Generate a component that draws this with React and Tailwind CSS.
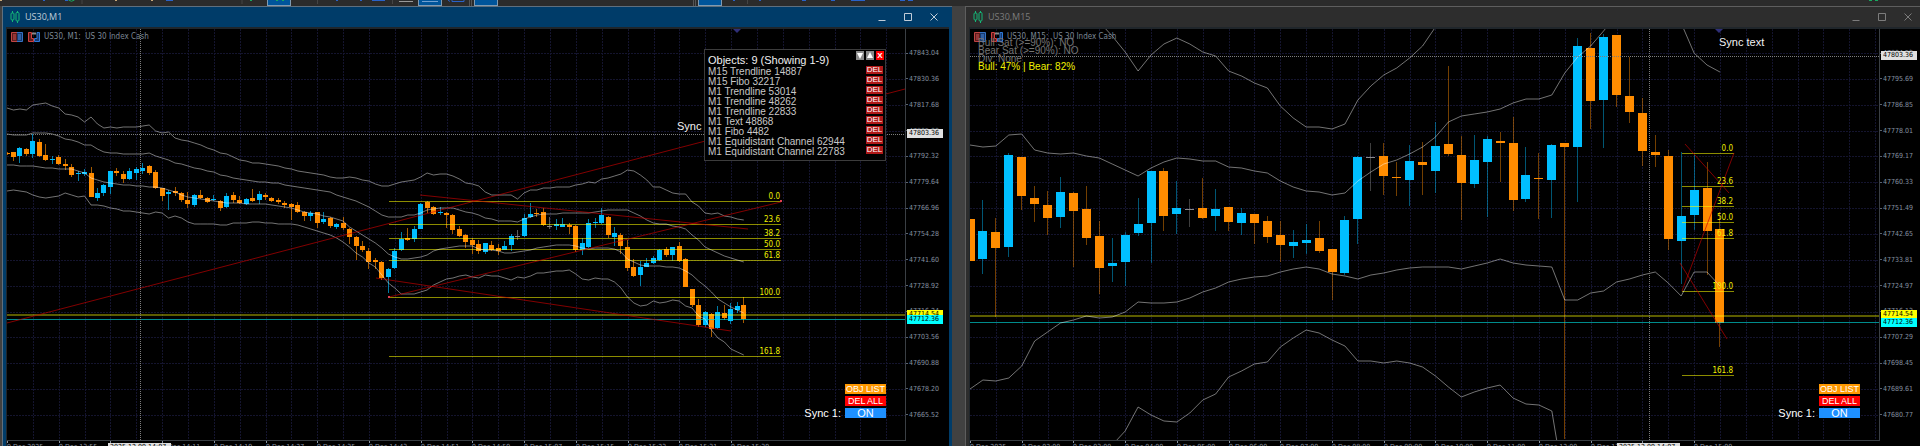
import { useState } from 'react';

// page y of the top edge of both plots; all price levels below are stored in that space
const PLOT_TOP = 29;
const PLOT_HEIGHT = 411;

const FILL = { u: '#00bfff', d: '#ff8c00', n: '#8a8a8a' };

// [direction, high, open/close top, open/close bottom, low]
const M1_CANDLES = [
  ['d', 152, 153, 154, 155], ['d', 152, 152, 157, 161], ['u', 147, 148, 156, 163], ['d', 148, 149, 154, 156], ['u', 134, 141, 154, 158],
  ['d', 139, 142, 156, 157], ['d', 144, 155, 160, 161], ['u', 156, 159, 160, 164], ['d', 155, 157, 164, 165], ['d', 159, 164, 166, 170],
  ['d', 164, 167, 175, 177], ['u', 171, 173, 174, 181], ['u', 169, 172, 174, 176], ['d', 167, 173, 197, 197], ['u', 188, 193, 198, 201],
  ['u', 184, 185, 193, 196], ['u', 171, 171, 187, 194], ['d', 168, 171, 173, 176], ['d', 171, 174, 179, 183], ['u', 168, 171, 179, 180],
  ['u', 167, 169, 173, 180], ['u', 163, 168, 171, 174], ['d', 165, 166, 173, 175], ['d', 170, 172, 188, 189], ['d', 188, 188, 196, 201],
  ['u', 190, 192, 194, 210], ['d', 187, 191, 193, 196], ['d', 192, 193, 200, 202], ['d', 192, 200, 204, 208], ['u', 194, 195, 205, 207],
  ['d', 190, 195, 198, 199], ['d', 197, 198, 202, 203], ['u', 195, 199, 200, 201], ['d', 200, 201, 208, 211], ['u', 193, 196, 207, 208],
  ['d', 192, 195, 200, 203], ['d', 196, 200, 203, 204], ['u', 198, 199, 204, 205], ['d', 189, 198, 201, 202], ['u', 191, 194, 200, 204],
  ['d', 193, 195, 197, 200], ['d', 197, 198, 201, 202], ['d', 198, 200, 202, 204], ['d', 201, 203, 205, 208], ['d', 203, 204, 207, 220],
  ['d', 202, 205, 212, 213], ['d', 211, 212, 216, 221], ['u', 211, 213, 216, 221], ['d', 212, 212, 223, 228], ['u', 212, 219, 222, 224],
  ['d', 217, 218, 226, 228], ['u', 223, 224, 227, 229], ['d', 217, 223, 228, 230], ['d', 228, 229, 237, 244], ['d', 236, 237, 246, 260],
  ['d', 241, 246, 250, 252], ['d', 248, 251, 262, 269], ['d', 258, 260, 262, 269], ['d', 261, 262, 278, 280], ['u', 268, 269, 277, 293],
  ['u', 248, 251, 268, 269], ['u', 232, 239, 250, 251], ['d', 228, 238, 240, 241], ['u', 226, 229, 239, 242], ['u', 203, 204, 229, 229],
  ['d', 201, 202, 208, 213], ['d', 206, 207, 214, 215], ['u', 207, 212, 213, 215], ['d', 212, 213, 215, 228], ['d', 214, 215, 230, 234],
  ['d', 226, 229, 236, 237], ['d', 234, 235, 242, 248], ['d', 238, 240, 245, 254], ['d', 240, 244, 251, 254], ['u', 243, 243, 252, 254],
  ['d', 241, 245, 250, 251], ['d', 244, 248, 251, 255], ['u', 241, 246, 250, 250], ['u', 234, 236, 245, 251], ['n', 230, 236, 237, 240],
  ['u', 214, 218, 236, 237], ['u', 203, 214, 217, 218], ['d', 209, 213, 214, 217], ['d', 208, 212, 225, 226], ['n', 217, 226, 227, 229],
  ['u', 219, 224, 226, 230], ['u', 218, 224, 227, 227], ['d', 223, 225, 227, 234], ['d', 225, 226, 250, 252], ['u', 238, 243, 250, 255],
  ['u', 219, 223, 247, 248], ['u', 218, 222, 223, 228], ['u', 208, 215, 223, 224], ['d', 216, 217, 235, 238], ['u', 227, 233, 237, 246],
  ['d', 233, 235, 246, 254], ['d', 240, 247, 268, 271], ['d', 259, 267, 276, 277], ['u', 261, 267, 275, 286], ['u', 258, 263, 267, 267],
  ['u', 256, 258, 263, 264], ['u', 249, 250, 260, 261], ['d', 247, 249, 255, 257], ['u', 247, 247, 255, 261], ['d', 242, 246, 261, 262],
  ['d', 258, 259, 287, 287], ['d', 289, 289, 305, 307], ['d', 299, 305, 325, 327], ['u', 311, 312, 325, 327], ['d', 313, 314, 329, 337],
  ['u', 306, 312, 328, 329], ['d', 305, 313, 318, 320], ['u', 303, 309, 321, 324], ['u', 302, 306, 310, 313], ['d', 297, 305, 319, 323],
];

const M15_CANDLES = [
  ['d', 219, 219, 261, 261], ['u', 200, 231, 259, 274], ['d', 218, 232, 248, 317], ['u', 153, 155, 247, 257], ['d', 157, 157, 196, 210],
  ['d', 186, 198, 204, 222], ['d', 191, 205, 218, 235], ['u', 177, 192, 217, 228], ['d', 192, 193, 211, 267], ['d', 186, 209, 238, 245],
  ['d', 221, 236, 268, 294], ['u', 238, 263, 266, 282], ['u', 232, 235, 262, 286], ['u', 198, 224, 233, 236], ['u', 171, 171, 223, 263],
  ['d', 168, 171, 216, 231], ['u', 181, 208, 214, 234], ['n', 199, 209, 210, 227], ['d', 178, 208, 218, 219], ['u', 189, 209, 216, 231],
  ['d', 207, 207, 222, 231], ['u', 208, 213, 223, 235], ['d', 214, 214, 223, 244], ['d', 216, 221, 237, 243], ['d', 221, 235, 245, 262],
  ['u', 230, 242, 246, 258], ['u', 224, 240, 243, 254], ['d', 221, 238, 251, 253], ['d', 249, 249, 272, 300], ['u', 216, 220, 273, 275],
  ['u', 156, 157, 219, 244], ['n', 143, 157, 158, 191], ['d', 143, 156, 176, 195], ['d', 162, 177, 178, 196], ['u', 145, 161, 180, 206],
  ['d', 142, 162, 165, 195], ['u', 122, 146, 171, 193], ['d', 66, 144, 154, 156], ['d', 136, 155, 183, 220], ['u', 135, 160, 184, 188],
  ['u', 136, 139, 162, 217], ['d', 132, 141, 143, 182], ['d', 117, 143, 200, 211], ['u', 147, 175, 199, 202], ['d', 153, 178, 179, 219],
  ['u', 144, 145, 180, 218], ['d', 143, 143, 147, 439], ['u', 38, 46, 147, 202], ['d', 33, 48, 101, 129], ['u', 34, 37, 100, 148],
  ['d', 35, 35, 95, 107], ['d', 57, 96, 112, 123], ['d', 98, 113, 151, 166], ['d', 135, 152, 155, 167], ['d', 150, 156, 239, 250],
  ['u', 152, 216, 241, 284], ['u', 155, 190, 215, 230], ['d', 162, 188, 231, 275], ['d', 212, 229, 323, 347],
];

// one value per bar, starting from bar `from`
const M1_BANDS = [
  { from: 0, values: [
    108, 110, 109, 110, 105, 104, 103, 106, 108, 114, 115, 117, 122, 117, 124, 128, 127, 128, 127, 127,
    127, 126, 125, 131, 133, 132, 138, 140, 141, 143, 145, 148, 150, 153, 154, 157, 160, 161, 163, 163,
    164, 165, 166, 168, 169, 171, 172, 173, 174, 175, 177, 178, 178, 177, 178, 180, 181, 184, 186, 186,
    184, 182, 181, 180, 177, 173, 175, 174, 174, 176, 179, 183, 184, 186, 192, 195, 195, 195, 195, 199,
    193, 190, 190, 188, 188, 187, 187, 187, 185, 184, 182, 183, 179, 178, 176, 174, 170, 171, 175, 180,
    187, 187, 190, 193, 194, 194, 202, 206, 213, 214, 213, 216, 217, 219, 220,
  ] },
  { from: 0, values: [
    134, 135, 135, 135, 133, 133, 133, 134, 136, 139, 140, 142, 145, 145, 149, 152, 153, 153, 154, 154,
    154, 154, 153, 156, 158, 160, 163, 164, 166, 168, 169, 171, 172, 175, 176, 178, 179, 180, 181, 182,
    182, 183, 183, 185, 186, 187, 188, 189, 190, 191, 192, 195, 197, 199, 201, 204, 207, 211, 215, 217,
    217, 217, 215, 215, 213, 210, 209, 208, 208, 208, 210, 212, 213, 215, 218, 219, 221, 221, 221, 222,
    219, 217, 215, 214, 214, 214, 213, 213, 213, 213, 213, 212, 211, 210, 210, 210, 210, 213, 216, 220,
    223, 224, 224, 226, 227, 229, 235, 240, 247, 250, 253, 256, 258, 260, 262,
  ] },
  { from: 0, values: [
    165, 165, 166, 166, 166, 167, 168, 168, 169, 169, 169, 171, 173, 178, 180, 182, 183, 184, 185, 185,
    186, 186, 187, 187, 188, 190, 192, 195, 197, 198, 199, 200, 201, 202, 203, 203, 203, 204, 204, 204,
    204, 205, 206, 207, 208, 210, 212, 213, 214, 216, 217, 219, 221, 227, 231, 235, 239, 243, 248, 254,
    257, 259, 259, 258, 257, 255, 251, 249, 248, 247, 246, 246, 246, 249, 250, 250, 251, 253, 253, 252,
    251, 250, 248, 247, 246, 245, 245, 245, 246, 248, 249, 248, 248, 248, 249, 252, 259, 262, 265, 266,
    266, 266, 267, 267, 268, 271, 275, 281, 286, 292, 299, 303, 307, 310, 313,
  ] },
  { from: 0, values: [
    191, 190, 191, 192, 195, 197, 198, 197, 196, 193, 195, 197, 196, 205, 205, 206, 208, 209, 211, 211,
    212, 213, 214, 212, 213, 218, 216, 218, 222, 224, 224, 224, 224, 225, 225, 223, 223, 223, 222, 222,
    223, 223, 224, 224, 224, 225, 227, 229, 231, 233, 235, 238, 242, 247, 253, 257, 263, 267, 275, 283,
    288, 294, 294, 294, 292, 290, 285, 282, 279, 278, 276, 275, 277, 278, 275, 276, 276, 278, 280, 277,
    278, 276, 273, 273, 272, 271, 271, 270, 274, 279, 280, 278, 279, 279, 282, 288, 297, 303, 306, 305,
    301, 303, 302, 300, 301, 306, 308, 316, 319, 330, 338, 342, 349, 352, 355,
  ] },
];

const M15_BANDS = [
  { from: 10, values: [
    22, 36, 52, 71, 55, 44, 38, 44, 52, 56, 71, 76, 83, 88, 106, 118, 127, 127, 129, 124, 100, 86, 75, 68, 58, 46, 27,
  ] },
  { from: 55, values: [23, 53, 65, 72] },
  { from: 0, values: [
    145, 147, 146, 135, 134, 150, 153, 154, 153, 156, 158, 164, 170, 176, 168, 162, 158, 159, 161, 161,
    167, 168, 171, 173, 181, 187, 191, 192, 195, 193, 181, 172, 164, 160, 154, 147, 137, 122, 116, 114,
    112, 109, 103, 99, 99, 95, 73, 57, 46, 31, 15,
  ] },
  { from: 0, values: [
    389, 380, 381, 378, 366, 341, 332, 323, 320, 316, 318, 317, 312, 302, 303, 303, 302, 298, 292, 288,
    282, 279, 277, 276, 272, 269, 267, 269, 274, 276, 279, 275, 273, 270, 268, 267, 267, 267, 269, 266,
    263, 259, 263, 265, 266, 267, 300, 300, 293, 291, 282, 279, 275, 272, 283, 296, 272, 272, 286,
  ] },
  { from: 11, values: [
    445, 431, 407, 415, 421, 422, 413, 400, 394, 377, 371, 364, 362, 347, 338, 330, 333, 340, 346, 361,
    361, 363, 361, 363, 367, 376, 387, 397, 392, 388, 385, 398, 404, 405, 411, 489,
  ] },
];

const M1 = {
  step: 6.463,
  bodyWidth: 5,
  wickOpacity: 0.65,
  candles: M1_CANDLES,
  bands: M1_BANDS,
  header: 'US30, M1:\u00a0 US 30 Index Cash',
  fibo: { x1: 382, x2: 774, levels: [['0.0', 201], ['23.6', 224], ['38.2', 238], ['50.0', 249], ['61.8', 260], ['100.0', 297], ['161.8', 356]] },
  trendlines: [[0, 323, 898, 89], [382, 297, 774, 202], [413, 195, 741, 229], [369, 278, 724, 331]],
  anchors: [[382, 297], [774, 201]],
  cross: { x: 133, y: 133 },
  levels: { bid: 314, ask: 319 },
  marker: 730,
  syncText: [670, 130],
  prices: ['47843.04', '47830.36', '47817.68', '47805.00', '47792.32', '47779.64', '47766.96', '47754.28', '47741.60', '47728.92', '47716.24', '47703.56', '47690.88', '47678.20', '47665.52'],
  tags: [
    { text: '47803.36', className: 'top-[100px] bg-[#e0e0e0]' },
    { text: '47714.54', className: 'top-[281px] bg-[#ffff00]' },
    { text: '47712.36', className: 'top-[286px] bg-[#00ffff]' },
  ],
  times: ['9 Dec 2025', '9 Dec 13:55', '', '9 Dec 14:11', '9 Dec 14:19', '9 Dec 14:27', '9 Dec 14:35', '9 Dec 14:43', '9 Dec 14:51', '9 Dec 14:59', '9 Dec 15:07', '9 Dec 15:15', '9 Dec 15:23', '9 Dec 15:31', '9 Dec 15:39'],
  timeTag: 101,
};

const M15 = {
  step: 12.93,
  bodyWidth: 9,
  wickOpacity: 0.45,
  candles: M15_CANDLES,
  bands: M15_BANDS,
  header: 'US30, M15:\u00a0 US 30 Index Cash',
  fibo: { x1: 712, x2: 764, levels: [['0.0', 153], ['23.6', 186], ['38.2', 206], ['50.0', 222], ['61.8', 238], ['100.0', 291], ['161.8', 375]] },
  trendlines: [[715, 144, 759, 193], [764, 153, 712, 291], [710, 263, 757, 339]],
  anchors: [],
  cross: { x: 679, y: 55 },
  levels: { bid: 315, ask: 322 },
  marker: 749,
  syncText: [749, 46],
  prices: ['47804.53', '47795.69', '47786.85', '47778.01', '47769.17', '47760.33', '47751.49', '47742.65', '47733.81', '47724.97', '47716.13', '47707.29', '47698.45', '47689.61', '47680.77'],
  tags: [
    { text: '47803.36', className: 'top-[22px] bg-[#e0e0e0]' },
    { text: '47714.54', className: 'top-[281px] bg-[#ffff00]' },
    { text: '47712.36', className: 'top-[289px] bg-[#00ffff]' },
  ],
  times: ['9 Dec 2025', '9 Dec 02:00', '9 Dec 03:00', '9 Dec 04:00', '9 Dec 05:00', '9 Dec 06:00', '9 Dec 07:00', '9 Dec 08:00', '9 Dec 09:00', '9 Dec 10:00', '9 Dec 11:00', '9 Dec 12:00', '9 Dec 13:00', '', '9 Dec 15:00'],
  timeTag: 647,
};

const OBJECTS = [
  'M15 Trendline 14887',
  'M15 Fibo 32217',
  'M1 Trendline 53014',
  'M1 Trendline 48262',
  'M1 Trendline 22833',
  'M1 Text 48868',
  'M1 Fibo 4482',
  'M1 Equidistant Channel 62944',
  'M1 Equidistant Channel 22783',
];

const GRID_STEP = 25.86;
const range = (n) => Array.from({ length: n }, (_, i) => i);

const Plot = ({ chart }) => {
  const { step, bodyWidth, fibo, cross, levels } = chart;
  return (
    <svg className="block w-full h-[411px]" role="img" aria-label={chart.header}>
      <g transform={`translate(0 ${-PLOT_TOP})`}>
        {/* Grid */}
        <g stroke="#14142e" strokeDasharray="2 1" shapeRendering="crispEdges">
          {range(60).map(i => (
            <line key={i} x1={Math.round((i + 1) * GRID_STEP)} x2={Math.round((i + 1) * GRID_STEP)} y1={PLOT_TOP} y2={PLOT_TOP + PLOT_HEIGHT} />
          ))}
          {range(15).map(i => (
            <line key={i} x1="0" x2="100%" y1={Math.round(53 + i * GRID_STEP)} y2={Math.round(53 + i * GRID_STEP)} />
          ))}
        </g>

        {/* Candles */}
        {chart.candles.map(([dir, high, top, bottom, low], i) => {
          const x = Math.floor(i * step);
          return (
            <g key={i} fill={FILL[dir]} shapeRendering="crispEdges">
              <rect x={x} y={high} width="1" height={low - high} opacity={chart.wickOpacity} />
              <rect x={x - (bodyWidth - 1) / 2} y={top} width={bodyWidth} height={Math.max(bottom - top, 1)} />
            </g>
          );
        })}

        {/* Fibo levels */}
        {fibo.levels.map(([label, y]) => (
          <rect key={label} x={fibo.x1} y={y} width={fibo.x2 - fibo.x1} height="1" fill="#ffff00" opacity="0.55" />
        ))}

        {/* Bid / ask */}
        <rect x="0" y={levels.bid} width="100%" height="2" fill="#ffff00" opacity="0.36" />
        <rect x="0" y={levels.ask} width="100%" height="1" fill="#00d5d5" opacity="0.65" />

        {/* Bands */}
        <g fill="none" stroke="#ffffff" strokeOpacity="0.45">
          {chart.bands.map((band, n) => (
            <polyline key={n} points={band.values.map((y, i) => `${(band.from + i) * step},${y}`).join(' ')} />
          ))}
        </g>

        <g stroke="#c80000" strokeOpacity="0.65">
          {chart.trendlines.map(([x1, y1, x2, y2]) => (
            <line key={`${x1}-${y1}`} x1={x1} y1={y1} x2={x2} y2={y2} />
          ))}
        </g>
        {chart.anchors.map(([x, y]) => (
          <rect key={x} x={x - 1} y={y - 1} width="2" height="2" fill="#e04050" />
        ))}

        {/* Crosshair */}
        <g stroke="#7d7d7d" strokeDasharray="1 1" shapeRendering="crispEdges">
          <line x1={cross.x} x2={cross.x} y1={PLOT_TOP} y2={PLOT_TOP + PLOT_HEIGHT} />
          <line x1="0" x2="100%" y1={cross.y + 1} y2={cross.y + 1} />
        </g>

        <path d={`M${chart.marker - 4} ${PLOT_TOP}h8l-4 4z`} fill="#2f2f78" />

        <g className="font-['DejaVu_Sans_Condensed','DejaVu_Sans',sans-serif] text-[8px]" fill="#f0f000" textAnchor="end">
          {fibo.levels.map(([label, y]) => (
            <text key={label} x={fibo.x2 - 1} y={y - 2}>{label}</text>
          ))}
        </g>
        <text x={chart.syncText[0]} y={chart.syncText[1]} className="text-[11px]" fill="#f2f2f2">Sync text</text>
      </g>
    </svg>
  );
};

const TimeAxis = ({ chart }) => (
  <svg className="block w-full h-4 font-['DejaVu_Sans_Condensed','DejaVu_Sans',sans-serif] text-[7px]" aria-label="Time axis">
    {chart.times.map((time, i) => (
      <g key={i} fill="#8a95a3">
        <rect x={Math.round(i * GRID_STEP * 2)} y="0" width="1" height="2" />
        <text x={Math.round(i * GRID_STEP * 2)} y="8">{time}</text>
      </g>
    ))}
    <rect x={chart.timeTag} y="2" width="63" height="9" fill="#e0e0e0" />
    <text x={chart.timeTag + 2} y="8" fill="#000000">2025.12.09 14:07</text>
  </svg>
);

const PriceAxis = ({ chart, className }) => (
  <div className={`relative shrink-0 font-['DejaVu_Sans_Condensed','DejaVu_Sans',sans-serif] text-[7px] leading-[10px] text-[#8592a0] ${className}`}>
    <ul className="mt-[19px] h-[372px] flex flex-col justify-between">
      {chart.prices.map(price => (
        <li key={price} className="flex items-center gap-px">
          <span className="w-[2px] h-px bg-[#5a636d]" />
          {price}
        </li>
      ))}
    </ul>
    {chart.tags.map(tag => (
      <span key={tag.text} className={`absolute left-px w-9 h-[9px] pl-[2px] leading-[9px] text-black ${tag.className}`}>{tag.text}</span>
    ))}
  </div>
);

const ChartHeader = ({ label }) => (
  <div className="absolute left-1 top-[3px] flex items-center text-[8px] leading-[10px] text-[#7b8794] font-['DejaVu_Sans_Condensed','DejaVu_Sans',sans-serif]">
    <svg width="12" height="10" viewBox="0 0 12 10" fill="none" aria-hidden="true">
      <path d="M6 .5H.5v9H6" fill="#5c1c1c" stroke="#c04444" />
      <path d="M6 .5h5.5v9H6" fill="#173a6e" stroke="#3572c4" />
      <path d="M2 3h3M2 5h3M2 7h3" stroke="#d05050" />
      <path d="M7 3h3M7 5h3M7 7h3" stroke="#4a88dc" />
    </svg>
    <svg className="ml-[5px] mr-1" width="12" height="10" viewBox="0 0 12 10" fill="none" aria-hidden="true">
      <path d="M3.500 .5H.5v9h5v-3h-2z" fill="#5c1c1c" stroke="#d04040" />
      <path d="M9 .5h2.500v9h-5v-3H9z" fill="#173a6e" stroke="#2f78d8" />
      <path d="M4 .5h4v2H4z" fill="#8a8a8a" />
    </svg>
    {label}
  </div>
);

const SyncControls = () => {
  const [on, setOn] = useState(true);
  return (
    <div className="absolute right-[19px] top-[355px] flex flex-col items-end gap-[2px] text-[9px] text-white">
      <button type="button" className="w-[41px] h-[10px] leading-[10px] bg-[#ff9800]">OBJ LIST</button>
      <button type="button" className="w-[41px] h-[10px] leading-[10px] bg-[#ff0000]">DEL ALL</button>
      <div className="flex items-center gap-1 text-[11px] leading-[10px]">
        <span>Sync 1:</span>
        <button type="button" onClick={() => setOn(!on)} className="w-[41px] h-[10px] bg-[#1e90ff]">{on ? 'ON' : 'OFF'}</button>
      </div>
    </div>
  );
};

const ObjectPanel = () => {
  const [objects, setObjects] = useState(OBJECTS);
  const [open, setOpen] = useState(true);
  const count = objects.length;

  if (!open) return null;

  return (
    <section className="absolute right-[19px] top-[20px] w-[182px] h-[112px] border border-[#3c3c3c] bg-black pl-[3px] text-[#c8c8c8]">
      <header className="flex justify-between pr-px pt-px">
        <h2 className="pt-[2px] text-[11px] leading-[14px] text-[#f0f0f0]">Objects: {count} (Showing 1-{count})</h2>
        <div className="flex gap-[2px]">
          <button type="button" aria-label="Scroll down" className="w-2 h-[9px] bg-[#8a8a8a]">
            <svg className="block" width="8" height="9" viewBox="0 0 8 9" fill="#ffffff"><path d="M1 2h6L4 8z" /></svg>
          </button>
          <button type="button" aria-label="Scroll up" className="w-2 h-[9px] bg-[#8a8a8a]">
            <svg className="block" width="8" height="9" viewBox="0 0 8 9" fill="#ffffff"><path d="M1 7h6L4 1z" /></svg>
          </button>
          <button type="button" onClick={() => setOpen(false)} className="w-2 h-[9px] bg-[#ff0000] text-[8px] leading-[9px] font-bold text-white">X</button>
        </div>
      </header>
      <ul className="text-[10px] leading-[10px]">
        {objects.map(name => (
          <li key={name} className="flex justify-between items-start h-[10px] pr-[2px]">
            {name}
            <button
              type="button"
              onClick={() => setObjects(prev => prev.filter(item => item !== name))}
              className="-mt-px w-[17px] h-2 bg-[#b01818] text-[8px] leading-[8px] text-white"
            >
              DEL
            </button>
          </li>
        ))}
      </ul>
    </section>
  );
};

const WindowTitle = ({ title, active }) => (
  <div className={`flex items-center h-5 pl-[7px] ${active ? 'pr-[10px] text-[#c0ccd8] bg-[#003c69]' : 'pr-[7px] text-[#7c7c7c] bg-[#2d2d2d]'}`}>
    <svg width="10" height="12" viewBox="0 0 10 12" fill="none" stroke="#14b878" aria-hidden="true">
      <path d="M2.500 0v2M2.500 9v2M7.500 0v1M7.500 10v2" />
      <rect x="1" y="2" width="3" height="7" rx="1" />
      <rect x="6" y="1.500" width="3" height="8.500" rx="1" />
    </svg>
    <h1 className="ml-[5px] text-[9px] leading-[12px] font-['Open_Sans','Noto_Sans',sans-serif]">{title}</h1>
    <div className="ml-auto flex gap-4">
      <button type="button" aria-label="Minimize">
        <svg className="block" width="10" height="10" viewBox="0 0 10 10" fill="none" stroke="currentColor"><path d="M1.500 8.500h7" /></svg>
      </button>
      <button type="button" aria-label="Maximize">
        <svg className="block" width="10" height="10" viewBox="0 0 10 10" fill="none" stroke="currentColor"><path d="M1.500 1.500h7v7h-7z" /></svg>
      </button>
      <button type="button" aria-label="Close">
        <svg className="block" width="10" height="10" viewBox="0 0 10 10" fill="none" stroke="currentColor"><path d="M1.500 1.500l7 7M8.500 1.500l-7 7" /></svg>
      </button>
    </div>
  </div>
);

const ChartWindow = ({ title, chart, active, children }) => (
  <section className={`min-w-0 overflow-hidden border-t border-l ${active ? 'border-[#5f6f7d] bg-[#003c69] pr-[3px]' : 'border-[#5e5e5e] bg-[#2d2d2d]'}`}>
    <WindowTitle title={title} active={active} />
    <div className="flex ml-[3px] border-t-2 border-l border-[#20262b] bg-black">
      <div className="min-w-0 flex-1">
        <div className="relative border-r border-b border-[#3a3f44]">
          <Plot chart={chart} />
          <ChartHeader label={chart.header} />
          {children}
          <SyncControls />
        </div>
        <TimeAxis chart={chart} />
      </div>
      <PriceAxis chart={chart} className={active ? 'w-[43px]' : 'w-10'} />
    </div>
  </section>
);

const ToolButton = ({ label, children }) => (
  <button type="button" aria-label={label} className="w-6 shrink-0 bg-[#00559b] border-x border-b border-[#7f9bb3]">
    <svg className="block" width="22" height="5" viewBox="0 0 22 5">{children}</svg>
  </button>
);

const Toolbar = () => (
  <div role="toolbar" className="flex h-[6px] overflow-hidden bg-[#2b2b2b]">
    <svg className="block shrink-0" width="267" height="6" viewBox="0 0 267 6">
      <path d="M0 0h2v1H0zM115 0h2v1h-2zM151 0h2v1h-2z" fill="#c8a878" />
      <path d="M43 0h2v1h-2zM65 0h3v1h-3zM166 0h7v1h-7z" fill="#2a62c8" />
      <path d="M68.500 0q3 2.500 6 0" stroke="#18a860" fill="none" />
      <path d="M250 0h2v1h-2z" fill="#18a860" />
      <path d="M82 0v4M242 0v4" stroke="#454545" />
    </svg>
    <ToolButton label="Candles"><path d="M8 0h2v1H8zM14 0h2v1h-2z" fill="#18a860" /></ToolButton>
    <svg className="block shrink-0" width="127" height="6" viewBox="0 0 127 6">
      <path d="M45 0h2v1h-2zM69 0h2v1h-2zM81 0h13v1H81z" fill="#2a62c8" />
      <path d="M26.500 0v4M101.500 0v4" stroke="#454545" />
      <path d="M108 1.500h14" stroke="#9a9a9a" />
    </svg>
    <ToolButton label="Horizontal line"><path d="M3 1.500h16" stroke="#6f9fd0" /></ToolButton>
    <svg className="block shrink-0" width="32" height="6" viewBox="0 0 32 6">
      <path d="M6 0l2 1.500M10 0v1.500h12V0" stroke="#2a62c8" fill="none" />
      <path d="M27.500 0v6M29.500 0v6" stroke="#555555" />
    </svg>
    <ToolButton label="Sync" />
    <svg className="block shrink-0" width="200" height="6" viewBox="0 0 200 6">
      <path d="M195.500 0v6M197.500 0v6" stroke="#555555" />
    </svg>
    <ToolButton label="Cursor" />
    <svg className="block flex-1" height="6">
      <path d="M11 0h2v1h-2zM37 0h2v1h-2zM80 0h4v1h-4zM109 0h4v1h-4zM129 0h14v1h-14zM178 0h5v1h-5zM186 0h5v1h-5z" fill="#2a62c8" />
      <path d="M25.500 0v4" stroke="#454545" />
    </svg>
    <svg className="block shrink-0" width="52" height="6" viewBox="0 0 52 6">
      <path d="M1 0h3v1H1zM7 0h3v1H7z" fill="#18a860" />
    </svg>
  </div>
);

const App = () => (
  <div className="h-screen overflow-hidden bg-[#414141] font-['Liberation_Sans',Arial,sans-serif]">
    <Toolbar />
    <main className="grid grid-cols-[950fr_955fr] gap-[13px] pl-[2px]">
      <ChartWindow title="US30,M1" chart={M1} active>
        <ObjectPanel />
      </ChartWindow>
      <ChartWindow title="US30,M15" chart={M15}>
        <div className="absolute left-2 top-[10px] text-[10px] leading-[8px] text-[#747474]">
          <p>Bull Sat (&gt;=90%): NO</p>
          <p>Bear Sat (&gt;=90%): NO</p>
          <p>Div: None</p>
          <p className="text-[#f0f000]">Bull: 47% | Bear: 82%</p>
        </div>
      </ChartWindow>
    </main>
  </div>
);

export default App;
